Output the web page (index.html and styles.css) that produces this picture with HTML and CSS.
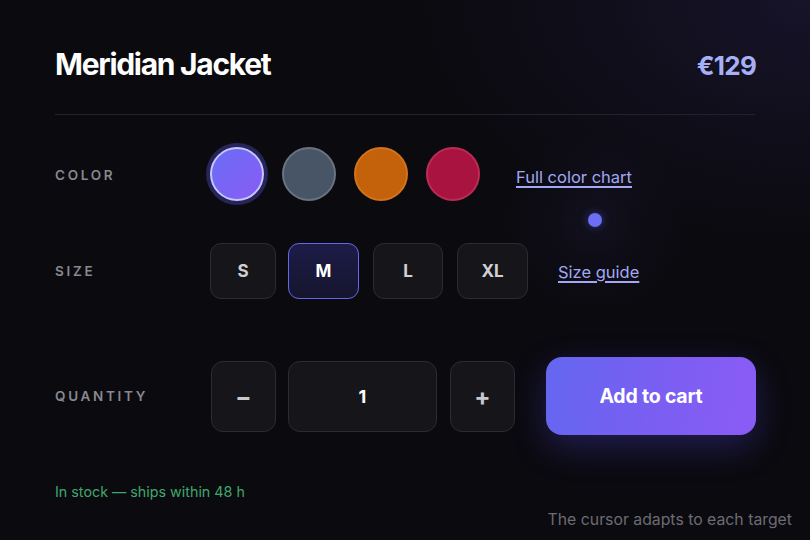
FILE: index.html
```html
<!DOCTYPE html>
<html lang="en">
<head>
<meta charset="utf-8">
<title>Meridian Jacket</title>
<link rel="stylesheet" href="styles.css">
</head>
<body>
<main class="card">
  <header class="head">
    <h1 class="title">Meridian Jacket</h1>
    <div class="price">€129</div>
  </header>
  <div class="divider"></div>

  <section class="row row-color">
    <div class="label">COLOR</div>
    <div class="options">
      <button class="swatch swatch-violet is-selected" aria-label="Violet"></button>
      <button class="swatch swatch-slate" aria-label="Slate"></button>
      <button class="swatch swatch-orange" aria-label="Orange"></button>
      <button class="swatch swatch-red" aria-label="Red"></button>
      <a class="link link-color" href="#">Full color chart</a>
    </div>
  </section>

  <section class="row row-size">
    <div class="label">SIZE</div>
    <div class="options sizes">
      <button class="size size-s">S</button>
      <button class="size size-m is-selected">M</button>
      <button class="size size-l">L</button>
      <button class="size size-xl">XL</button>
      <a class="link link-size" href="#">Size guide</a>
    </div>
  </section>

  <section class="row row-qty">
    <div class="label">QUANTITY</div>
    <div class="options qty">
      <button class="step step-minus">−</button>
      <div class="qty-field">1</div>
      <button class="step step-plus">+</button>
      <button class="cart">Add to cart</button>
    </div>
  </section>

  <p class="stock">In stock — ships within 48 h</p>

  <div class="cursor-dot"></div>
  <p class="hint">The cursor adapts to each target</p>
</main>
</body>
</html>
```
FILE: styles.css
```css
* { box-sizing: border-box; }
html, body { margin: 0; height: 100%; }
body {
  background:
    radial-gradient(ellipse 520px 320px at 810px 0px, rgba(55, 42, 110, 0.28), rgba(55,42,110,0) 75%),
    radial-gradient(circle 90px at 595px 220px, rgba(70, 70, 160, 0.10), rgba(70,70,160,0) 100%),
    #0b0a0f;
  font-family: Inter, "Noto Sans", "Liberation Sans", sans-serif;
  color: #fff;
  overflow: hidden;
}
.card {
  position: relative;
  width: 810px;
  height: 540px;
  padding: 47px 55px 0 55px;
}
.head {
  display: flex;
  justify-content: space-between;
  align-items: baseline;
  height: 67px;
}
.title {
  margin: 0;
  font-size: 30px;
  line-height: 34px;
  font-weight: 700;
  letter-spacing: -0.043em;
  color: #ffffff;
}
.price {
  font-size: 26px;
  font-weight: 700;
  letter-spacing: -0.03em;
  color: #a5b0f6;
  margin-right: -1px;
}
.divider {
  height: 1px;
  background: #23222b;
}
.row {
  display: flex;
  align-items: center;
}
.label {
  width: 155px;
  flex: none;
  font-size: 13.5px;
  font-weight: 600;
  letter-spacing: 0.2em;
  color: #88888f;
}
.options {
  display: flex;
  align-items: center;
}
.row-color { margin-top: 32px; height: 54px; }
.row-color .label { padding-top: 2px; }
.swatch {
  width: 54px;
  height: 54px;
  border-radius: 50%;
  padding: 0;
  margin: 0 18px 0 0;
  border: 2px solid rgba(255,255,255,0.14);
}
.swatch-violet {
  background: linear-gradient(135deg, #6a6cf6, #8a5cf4);
  border: 2.5px solid #c3c8ff;
  box-shadow: 0 0 0 4px #26245a;
}
.swatch-slate { background: #475567; border-color: #6a7480; }
.swatch-orange { background: #c4620b; border-color: #d3731e; }
.swatch-red { background: #a9133f; border-color: #bd2c56; }
.link {
  font-size: 16.5px;
  color: #a3a8f4;
  text-decoration: underline;
  text-underline-offset: 3px;
  text-decoration-thickness: 1.5px;
}
.link-color { margin-left: 18px; margin-top: 6px; }

.row-size { margin-top: 42px; height: 56px; }
.size {
  height: 56px;
  margin: 0 14px 0 0;
  padding: 0;
  border-radius: 11px;
  border: 1px solid #2b2b32;
  background: #16161a;
  font-family: inherit;
  font-size: 17px;
  font-weight: 700;
  color: #d0d0d6;
}
.size-s { width: 66px; margin-right: 12px; }
.size-m { width: 71px; }
.size-l { width: 70px; }
.size-xl { width: 71px; }
.size.is-selected {
  background: linear-gradient(180deg, #1c1c48, #15152e);
  border: 1.5px solid #6467ee;
  color: #ffffff;
}
.link-size { margin-left: 16px; margin-top: 2px; }

.row-qty { margin-top: 58px; height: 78px; }
.step {
  width: 65px;
  height: 71px;
  padding: 0;
  margin: 0 12px 0 0;
  border-radius: 12px;
  border: 1px solid #2b2b32;
  background: #16161a;
  font-family: inherit;
  font-size: 24px;
  font-weight: 700;
  color: #c8c8ce;
}
.step-minus { margin-left: 1px; }
.step-plus { margin-right: 31px; }
.qty-field {
  width: 149px;
  height: 71px;
  margin-right: 13px;
  border-radius: 12px;
  border: 1px solid #2b2b32;
  background: #16161a;
  display: flex;
  align-items: center;
  justify-content: center;
  font-size: 18px;
  font-weight: 700;
  color: #ffffff;
}
.cart {
  width: 210px;
  height: 78px;
  flex: none;
  border: 0;
  border-radius: 16px;
  background: linear-gradient(100deg, #6467f1 0%, #7b5ef2 55%, #8b5cf5 100%);
  box-shadow: 0 12px 34px rgba(80, 72, 220, 0.32);
  font-family: inherit;
  font-size: 19.5px;
  font-weight: 700;
  letter-spacing: -0.01em;
  color: #ffffff;
}
.stock {
  margin: 47px 0 0 0;
  font-size: 14.3px;
  line-height: 20px;
  color: #3fa76c;
}
.cursor-dot {
  position: absolute;
  left: 588px;
  top: 213px;
  width: 14px;
  height: 14px;
  border-radius: 50%;
  background: #6c6ff5;
  box-shadow: 0 0 10px rgba(99, 102, 241, 0.45);
}
.hint {
  position: absolute;
  right: 18px;
  bottom: 10px;
  margin: 0;
  font-size: 15.8px;
  line-height: 20px;
  color: #6c6c74;
}
```
